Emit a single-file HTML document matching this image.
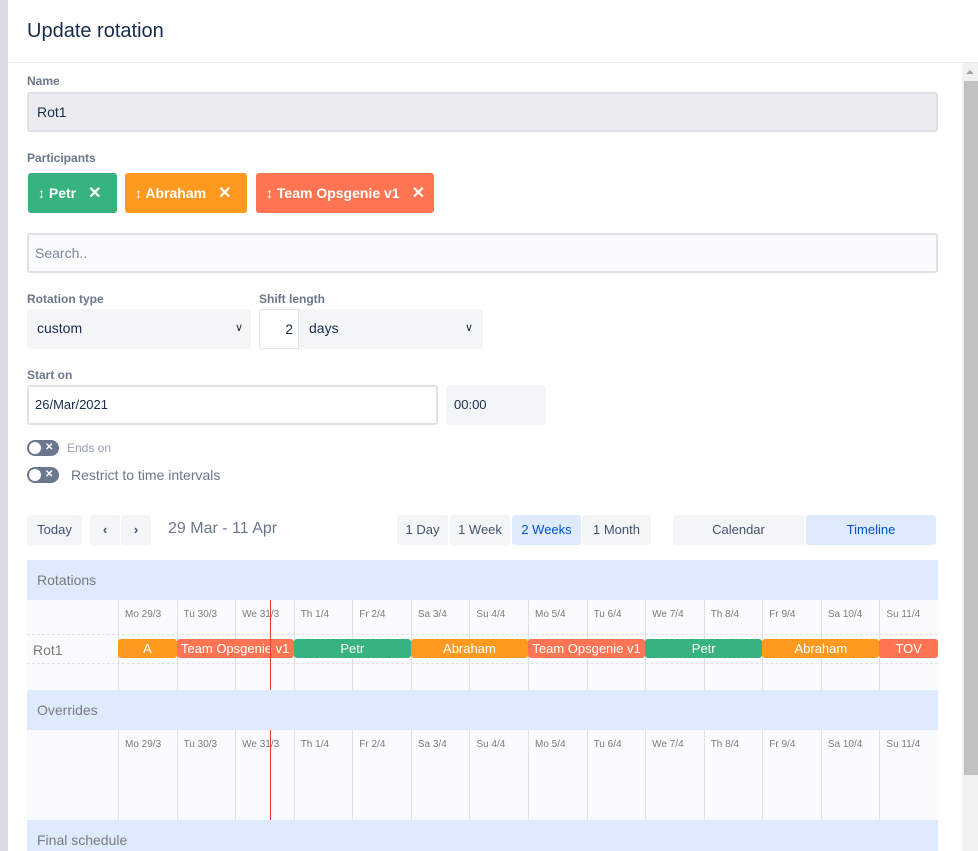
<!DOCTYPE html>
<html><head><meta charset="utf-8"><style>
*{box-sizing:border-box;margin:0;padding:0}
html,body{width:978px;height:851px;overflow:hidden}
body{background:#fff;font-family:"Liberation Sans",sans-serif;color:#172b4d;position:relative}
.a{position:absolute}
.lbl{font-size:12px;font-weight:bold;color:#6b778c}
.chip{height:40px;border-radius:3px;color:#fff;font-weight:bold;font-size:14px;line-height:40px;padding-left:10px}
.chip b{font-size:16px;margin-left:12px}
.btn{background:#f4f5f7;height:30px;line-height:30px;font-size:13px;color:#42526e;text-align:center;border-radius:3px}
.sel{background:#f4f5f7;border-radius:3px;font-size:14px;color:#172b4d;line-height:39px;padding-left:10px}
.hdr{left:27px;width:911px;height:40px;background:#deebff;color:#7a7a7a;font-size:14px;line-height:40px;padding-left:10px}
.grid{left:27px;width:911px;background:#fafbfc}
.vl{position:absolute;top:0;bottom:0;width:1px;background:#dfe1e6}
.day{position:absolute;font-size:10px;color:#7a7a7a;top:9px}
.bar{position:absolute;top:39px;height:19px;border-radius:3px;color:#fff;font-size:13px;line-height:19px;text-align:center;overflow:hidden;white-space:nowrap;padding:0 4px}
.tg{width:32px;height:16px;border-radius:8px;background:#6b778c}
.tg:before{content:"";position:absolute;left:2px;top:2px;width:12px;height:12px;border-radius:6px;background:#fff}
.tg:after{content:"✕";position:absolute;left:18px;top:2px;font-size:10px;line-height:12px;color:#fff;font-weight:bold}
</style></head><body>
<div class="a" style="left:0;top:0;width:8px;height:851px;background:#d9dce1"></div>
<div class="a" style="left:27px;top:20px;font-size:20px;color:#172b4d;font-weight:500">Update rotation</div>
<div class="a" style="left:8px;top:62px;width:970px;height:1px;background:#ebecf0"></div>
<div class="a" style="left:962px;top:63px;width:16px;height:788px;background:#f1f1f1"></div>
<div class="a" style="left:966px;top:70px;width:0;height:0;border-left:4px solid transparent;border-right:4px solid transparent;border-bottom:4px solid #a3a3a3"></div>
<div class="a" style="left:964px;top:81px;width:14px;height:694px;background:#c1c1c1"></div>

<div class="a lbl" style="left:27px;top:74px">Name</div>
<div class="a" style="left:27px;top:92px;width:911px;height:40px;background:#ebecf0;border:2px solid #dfe1e6;border-radius:3px;font-size:14px;line-height:36px;padding-left:8px">Rot1</div>
<div class="a lbl" style="left:27px;top:151px">Participants</div>
<div class="a chip" style="left:28px;top:173px;width:89px;background:#36b37e">↕ Petr<b>✕</b></div>
<div class="a chip" style="left:125px;top:173px;width:122px;background:#ff991f">↕ Abraham<b>✕</b></div>
<div class="a chip" style="left:256px;top:173px;width:178px;background:#ff7452">↕ Team Opsgenie v1<b>✕</b></div>
<div class="a" style="left:27px;top:233px;width:911px;height:40px;background:#fafbfc;border:2px solid #dfe1e6;border-radius:3px;font-size:14px;line-height:36px;padding-left:6px;color:#7a869a">Search..</div>

<div class="a lbl" style="left:27px;top:292px">Rotation type</div>
<div class="a lbl" style="left:259px;top:292px">Shift length</div>
<div class="a sel" style="left:27px;top:309px;width:224px;height:40px">custom<span class="a" style="right:8px;top:0;font-size:11px">&#x2228;</span></div>
<div class="a" style="left:259px;top:309px;width:40px;height:40px;border:1px solid #dfe1e6;border-radius:3px 0 0 3px;font-size:14px;line-height:38px;text-align:right;padding-right:5px">2</div>
<div class="a sel" style="left:299px;top:309px;width:184px;height:40px;border-radius:0 3px 3px 0">days<span class="a" style="right:10px;top:0;font-size:11px">&#x2228;</span></div>

<div class="a lbl" style="left:27px;top:368px">Start on</div>
<div class="a" style="left:27px;top:385px;width:411px;height:40px;border:2px solid #dfe1e6;border-radius:3px;font-size:13px;line-height:36px;padding-left:6px">26/Mar/2021</div>
<div class="a" style="left:446px;top:385px;width:100px;height:40px;background:#f4f5f7;border-radius:3px;font-size:13px;line-height:40px;padding-left:8px">00:00</div>

<div class="a tg" style="left:27px;top:440px"></div>
<div class="a" style="left:67px;top:441px;font-size:12px;color:#97a0af">Ends on</div>
<div class="a tg" style="left:27px;top:467px"></div>
<div class="a" style="left:71px;top:467px;font-size:14px;color:#6b778c">Restrict to time intervals</div>

<div class="a btn" style="left:27px;top:515px;width:55px">Today</div>
<div class="a btn" style="left:90px;top:515px;width:30px;font-weight:bold">‹</div>
<div class="a btn" style="left:121px;top:515px;width:30px;font-weight:bold">›</div>
<div class="a" style="left:168px;top:520px;font-size:16px;color:#6b778c">29 Mar - 11 Apr</div>
<div class="a btn" style="left:397px;top:515px;width:51px">1 Day</div>
<div class="a btn" style="left:450px;top:515px;width:60px">1 Week</div>
<div class="a btn" style="left:512px;top:515px;width:69px;background:#deebff;color:#0052cc">2 Weeks</div>
<div class="a btn" style="left:582px;top:515px;width:69px">1 Month</div>
<div class="a btn" style="left:673px;top:515px;width:131px">Calendar</div>
<div class="a btn" style="left:806px;top:515px;width:130px;background:#deebff;color:#0052cc">Timeline</div>

<div class="a hdr" style="top:560px">Rotations</div>
<div class="a grid" style="top:600px;height:90px" id="g1">
<div class="a" style="left:0;right:0;top:34px;border-top:1px dashed #dfe1e6"></div>
<div class="a" style="left:0;right:0;top:63px;border-top:1px dashed #dfe1e6"></div>
<div class="a" style="left:6px;top:42px;font-size:14px;color:#7a7a7a">Rot1</div>
</div>
<div class="a hdr" style="top:690px">Overrides</div>
<div class="a grid" style="top:730px;height:90px" id="g2"></div>
<div class="a hdr" style="top:820px;height:31px">Final schedule</div>
<div class="a" style="left:270px;top:600px;width:1px;height:90px;background:#e03e2d"></div>
<div class="a" style="left:270px;top:730px;width:1px;height:90px;background:#e03e2d"></div>
<script>
var d=["Mo 29/3","Tu 30/3","We 31/3","Th 1/4","Fr 2/4","Sa 3/4","Su 4/4","Mo 5/4","Tu 6/4","We 7/4","Th 8/4","Fr 9/4","Sa 10/4","Su 11/4"];
var w=820/14;
["g1","g2"].forEach(function(id){var g=document.getElementById(id),h="";
for(var i=0;i<14;i++){var x=91+i*w;h+='<div class="vl" style="left:'+x+'px"></div><div class="day" style="left:'+(x+7)+'px">'+d[i]+'</div>';}
g.insertAdjacentHTML('beforeend',h);});
var O="#ff991f",R="#ff7452",G="#36b37e";
var b=[[0,1,O,"A"],[1,2,R,"Team Opsgenie v1"],[3,2,G,"Petr"],[5,2,O,"Abraham"],[7,2,R,"Team Opsgenie v1"],[9,2,G,"Petr"],[11,2,O,"Abraham"],[13,1,R,"TOV"]];
var h="";b.forEach(function(e){h+='<div class="bar" style="left:'+(91+e[0]*w)+'px;width:'+(e[1]*w)+'px;background:'+e[2]+'">'+e[3]+'</div>';});
document.getElementById("g1").insertAdjacentHTML('beforeend',h);
</script>
</body></html>
